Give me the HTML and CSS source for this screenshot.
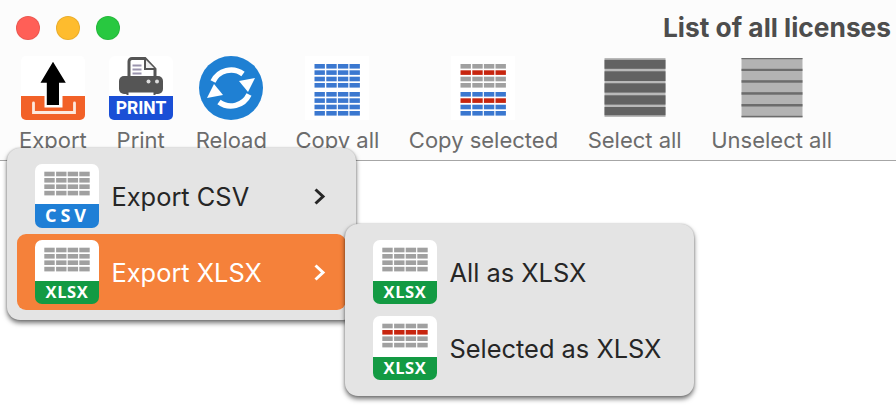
FILE: index.html
```html
<!DOCTYPE html>
<html lang="en">
<head>
<meta charset="utf-8">
<title>List of all licenses</title>
<link rel="stylesheet" href="styles.css">
</head>
<body>
<svg class="defs" width="0" height="0" aria-hidden="true">
  <defs>
    <g id="row">
      <rect x="0" width="10.4" height="4.6"/>
      <rect x="11.8" width="10.4" height="4.6"/>
      <rect x="23.4" width="10.4" height="4.6"/>
      <rect x="35" width="10.4" height="4.6"/>
    </g>
  </defs>
</svg>
<div class="window">
  <header class="titlebar">
    <div class="lights">
      <span class="light light-red"></span>
      <span class="light light-yellow"></span>
      <span class="light light-green"></span>
    </div>
    <h1 class="title">List of all licenses</h1>
  </header>
  <nav class="toolbar">
    <div class="tool tool-tight">
      <svg class="icon" viewBox="0 0 64 64">
        <path d="M0 5a5 5 0 0 1 5-5h54a5 5 0 0 1 5 5v35H0z" fill="#fff"/>
        <path d="M0 40h64v19a5 5 0 0 1-5 5H5a5 5 0 0 1-5-5z" fill="#f26128"/>
        <path d="M12.500 47v9.500h41V47" fill="none" stroke="#fde9df" stroke-width="2.800" stroke-linecap="round"/>
        <rect x="23.500" y="38" width="18" height="13.500" fill="#fff"/>
        <path d="M32 5.800 44.800 26.800H38V49H25.800V26.800H19.500z" fill="#000"/>
      </svg>
      <span class="tool-label">Export</span>
    </div>
    <div class="tool tool-tight">
      <svg class="icon" viewBox="0 0 64 64">
        <rect width="64" height="64" rx="6" fill="#fff"/>
        <path d="M0 40h64v19a5 5 0 0 1-5 5H5a5 5 0 0 1-5-5z" fill="#1a4fd6"/>
        <path d="M20 22V5.500a3 3 0 0 1 3-3H36l10 10.500V22" fill="#fff" stroke="#555" stroke-width="3"/>
        <path d="M36 3v10h10" fill="#eee" stroke="#555" stroke-width="2"/>
        <path d="M23.500 9.500h9M23.500 13.500h9M23.500 17.500h9" stroke="#9a94ad" stroke-width="2"/>
        <rect x="10" y="20" width="44" height="18" rx="5" fill="#555"/>
        <circle cx="39.500" cy="25.500" r="2" fill="#ddd"/>
        <circle cx="48" cy="25.500" r="2" fill="#ddd"/>
        <path d="M18.500 39v-3.500h27V39" fill="#fff" stroke="#555" stroke-width="2"/>
        <text class="svg-print" x="32" y="58" text-anchor="middle">PRINT</text>
      </svg>
      <span class="tool-label">Print</span>
    </div>
    <div class="tool tool-reload">
      <svg class="icon" viewBox="0 0 64 64">
        <circle cx="32" cy="32" r="32" fill="#1f80d3"/>
        <g fill="#fff">
          <path d="M14 25.500A20 20 0 0 1 44 18" fill="none" stroke="#fff" stroke-width="5.500"/>
          <path d="M56 22 49 36 40 25z"/>
        </g>
        <g transform="rotate(180 32 32)" fill="#fff">
          <path d="M14 25.500A20 20 0 0 1 44 18" fill="none" stroke="#fff" stroke-width="5.500"/>
          <path d="M56 22 49 36 40 25z"/>
        </g>
      </svg>
      <span class="tool-label">Reload</span>
    </div>
    <div class="tool">
      <svg class="icon" viewBox="0 0 64 64">
        <rect width="64" height="64" fill="#fff"/>
        <g fill="#3b78d0" transform="translate(9.500 0)">
          <use href="#row" y="8"/><use href="#row" y="14.300"/><use href="#row" y="20.700"/><use href="#row" y="27"/>
          <use href="#row" y="36"/><use href="#row" y="42.300"/><use href="#row" y="48.700"/><use href="#row" y="55"/>
        </g>
      </svg>
      <span class="tool-label">Copy all</span>
    </div>
    <div class="tool">
      <svg class="icon" viewBox="0 0 64 64">
        <rect width="64" height="64" fill="#fff"/>
        <g transform="translate(9.500 0)">
          <use href="#row" y="8" fill="#a0a0a0"/><use href="#row" y="14.300" fill="#c7250f"/><use href="#row" y="20.700" fill="#a0a0a0"/><use href="#row" y="27" fill="#a0a0a0"/>
          <use href="#row" y="36" fill="#3b78d0"/><use href="#row" y="42.300" fill="#c7250f"/><use href="#row" y="48.700" fill="#3b78d0"/><use href="#row" y="55" fill="#3b78d0"/>
        </g>
      </svg>
      <span class="tool-label">Copy selected</span>
    </div>
    <div class="tool">
      <svg class="icon" viewBox="0 0 64 64">
        <rect x="1.500" y="2" width="61" height="59" fill="#b9b9b9"/>
        <g fill="#626262">
          <rect x="1.500" y="3.800" width="61" height="9"/>
          <rect x="1.500" y="15.300" width="61" height="9.700"/>
          <rect x="1.500" y="27.300" width="61" height="9.300"/>
          <rect x="1.500" y="39.300" width="61" height="9.300"/>
          <rect x="1.500" y="51" width="61" height="8.300"/>
        </g>
      </svg>
      <span class="tool-label">Select all</span>
    </div>
    <div class="tool">
      <svg class="icon" viewBox="0 0 64 64">
        <rect x="1.500" y="2" width="61" height="59.300" fill="#b3b3b3"/>
        <g fill="#6c6c6c">
          <rect x="1.500" y="2" width="61" height="1.200"/>
          <rect x="1.500" y="12.800" width="61" height="2.200"/>
          <rect x="1.500" y="24.200" width="61" height="2.500"/>
          <rect x="1.500" y="36.200" width="61" height="2.500"/>
          <rect x="1.500" y="48" width="61" height="2.500"/>
          <rect x="1.500" y="59.800" width="61" height="1.500"/>
        </g>
      </svg>
      <span class="tool-label">Unselect all</span>
    </div>
  </nav>
</div>

<div class="menu menu-main">
  <div class="menu-item">
    <svg class="icon" viewBox="0 0 64 64">
      <path d="M0 7a7 7 0 0 1 7-7h50a7 7 0 0 1 7 7v33H0z" fill="#fff"/>
      <path d="M0 40h64v17a7 7 0 0 1-7 7H7a7 7 0 0 1-7-7z" fill="#1f7fd6"/>
      <g fill="#a0a0a0" transform="translate(9.300 0)">
        <use href="#row" y="7.700"/><use href="#row" y="14"/><use href="#row" y="20.400"/><use href="#row" y="26.800"/>
      </g>
      <text class="svg-badge" x="32.500" y="58" text-anchor="middle" letter-spacing="4">CSV</text>
    </svg>
    <span class="menu-label">Export CSV</span>
    <svg class="chevron" viewBox="0 0 13 17"><path d="M2.500 1.500 10 8.500 2.500 15.500" fill="none" stroke="currentColor" stroke-width="3"/></svg>
  </div>
  <div class="menu-item menu-item-active">
    <svg class="icon" viewBox="0 0 64 64">
      <path d="M0 7a7 7 0 0 1 7-7h50a7 7 0 0 1 7 7v34H0z" fill="#fff"/>
      <path d="M0 41h64v16a7 7 0 0 1-7 7H7a7 7 0 0 1-7-7z" fill="#139a43"/>
      <g fill="#a0a0a0" transform="translate(9.300 0)">
        <use href="#row" y="7.700"/><use href="#row" y="14"/><use href="#row" y="20.400"/><use href="#row" y="26.800"/>
      </g>
      <text class="svg-badge svg-badge-xlsx" x="32" y="58" text-anchor="middle" letter-spacing="0.600">XLSX</text>
    </svg>
    <span class="menu-label">Export XLSX</span>
    <svg class="chevron" viewBox="0 0 13 17"><path d="M2.500 1.500 10 8.500 2.500 15.500" fill="none" stroke="currentColor" stroke-width="3"/></svg>
  </div>
</div>

<div class="menu menu-sub">
  <div class="menu-item">
    <svg class="icon" viewBox="0 0 64 64">
      <path d="M0 7a7 7 0 0 1 7-7h50a7 7 0 0 1 7 7v34H0z" fill="#fff"/>
      <path d="M0 41h64v16a7 7 0 0 1-7 7H7a7 7 0 0 1-7-7z" fill="#139a43"/>
      <g fill="#a0a0a0" transform="translate(9.300 0)">
        <use href="#row" y="7.700"/><use href="#row" y="14"/><use href="#row" y="20.400"/><use href="#row" y="26.800"/>
      </g>
      <text class="svg-badge svg-badge-xlsx" x="32" y="58" text-anchor="middle" letter-spacing="0.600">XLSX</text>
    </svg>
    <span class="menu-label">All as XLSX</span>
  </div>
  <div class="menu-item">
    <svg class="icon" viewBox="0 0 64 64">
      <path d="M0 7a7 7 0 0 1 7-7h50a7 7 0 0 1 7 7v34H0z" fill="#fff"/>
      <path d="M0 41h64v16a7 7 0 0 1-7 7H7a7 7 0 0 1-7-7z" fill="#139a43"/>
      <g transform="translate(9.300 0)">
        <use href="#row" y="7.700" fill="#a0a0a0"/><use href="#row" y="14" fill="#c7250f"/><use href="#row" y="20.400" fill="#a0a0a0"/><use href="#row" y="26.800" fill="#a0a0a0"/>
      </g>
      <text class="svg-badge svg-badge-xlsx" x="32" y="58" text-anchor="middle" letter-spacing="0.600">XLSX</text>
    </svg>
    <span class="menu-label">Selected as XLSX</span>
  </div>
</div>
</body>
</html>
```

FILE: styles.css
```css
* { box-sizing: border-box; }

html, body {
  margin: 0;
  height: 100%;
  background: #fff;
  overflow: hidden;
}

body {
  position: relative;
  font-family: Inter, "Liberation Sans", sans-serif;
  color: #262626;
}

.defs { position: absolute; }

.window {
  background: #fcfcfc;
  border-bottom: 1px solid #a6a6a6;
  height: 161px;
}

.titlebar {
  height: 56px;
  display: flex;
  align-items: flex-start;
  justify-content: space-between;
  padding: 16px 5px 0 16px;
}

.lights { display: flex; gap: 16px; }

.light {
  width: 24px;
  height: 24px;
  border-radius: 50%;
  border: 1px solid rgba(0, 0, 0, .08);
}
.light-red { background: #ff5f57; }
.light-yellow { background: #febc2e; }
.light-green { background: #28c840; }

.title {
  margin: 0;
  font-size: 26.300px;
  line-height: 24px;
  font-weight: 700;
  color: #4d4d4d;
}

.toolbar {
  display: flex;
  padding-left: 19px;
  gap: 29.500px;
}

.tool {
  display: flex;
  flex-direction: column;
  align-items: center;
}
.tool-tight { margin-right: -7.500px; }
.tool-reload { margin: 0 -1px 0 1px; }

.icon {
  width: 64px;
  height: 64px;
  flex: none;
  display: block;
}

.tool-label {
  margin-top: 6px;
  font-size: 22px;
  line-height: 28px;
  color: #6c6c6c;
  white-space: nowrap;
}

.menu {
  position: absolute;
  width: 349px;
  background: #e4e4e4;
  border-radius: 13px;
  padding: 10px;
  box-shadow: 0 3px 5px rgba(0, 0, 0, .55), 0 0 2px rgba(0, 0, 0, .25);
}
.menu-main { left: 7px; top: 148px; height: 172px; }
.menu-sub { left: 345px; top: 224px; height: 172px; }

.menu-item {
  height: 76px;
  display: flex;
  align-items: center;
  padding: 0 20px 0 18px;
  border-radius: 9px;
}
.menu-item-active {
  background: #f5813a;
  color: #fff;
}

.menu-label {
  margin-left: 12.500px;
  font-size: 25.400px;
  white-space: nowrap;
}

.chevron {
  margin-left: auto;
  width: 13px;
  height: 17px;
  flex: none;
}

.svg-print {
  font-family: Roboto, sans-serif;
  font-weight: 700;
  font-size: 17.500px;
  fill: #fff;
}

.svg-badge {
  font-family: "Open Sans", sans-serif;
  font-weight: 700;
  font-size: 18px;
  fill: #fff;
}
.svg-badge-xlsx { font-size: 16.500px; }
```
